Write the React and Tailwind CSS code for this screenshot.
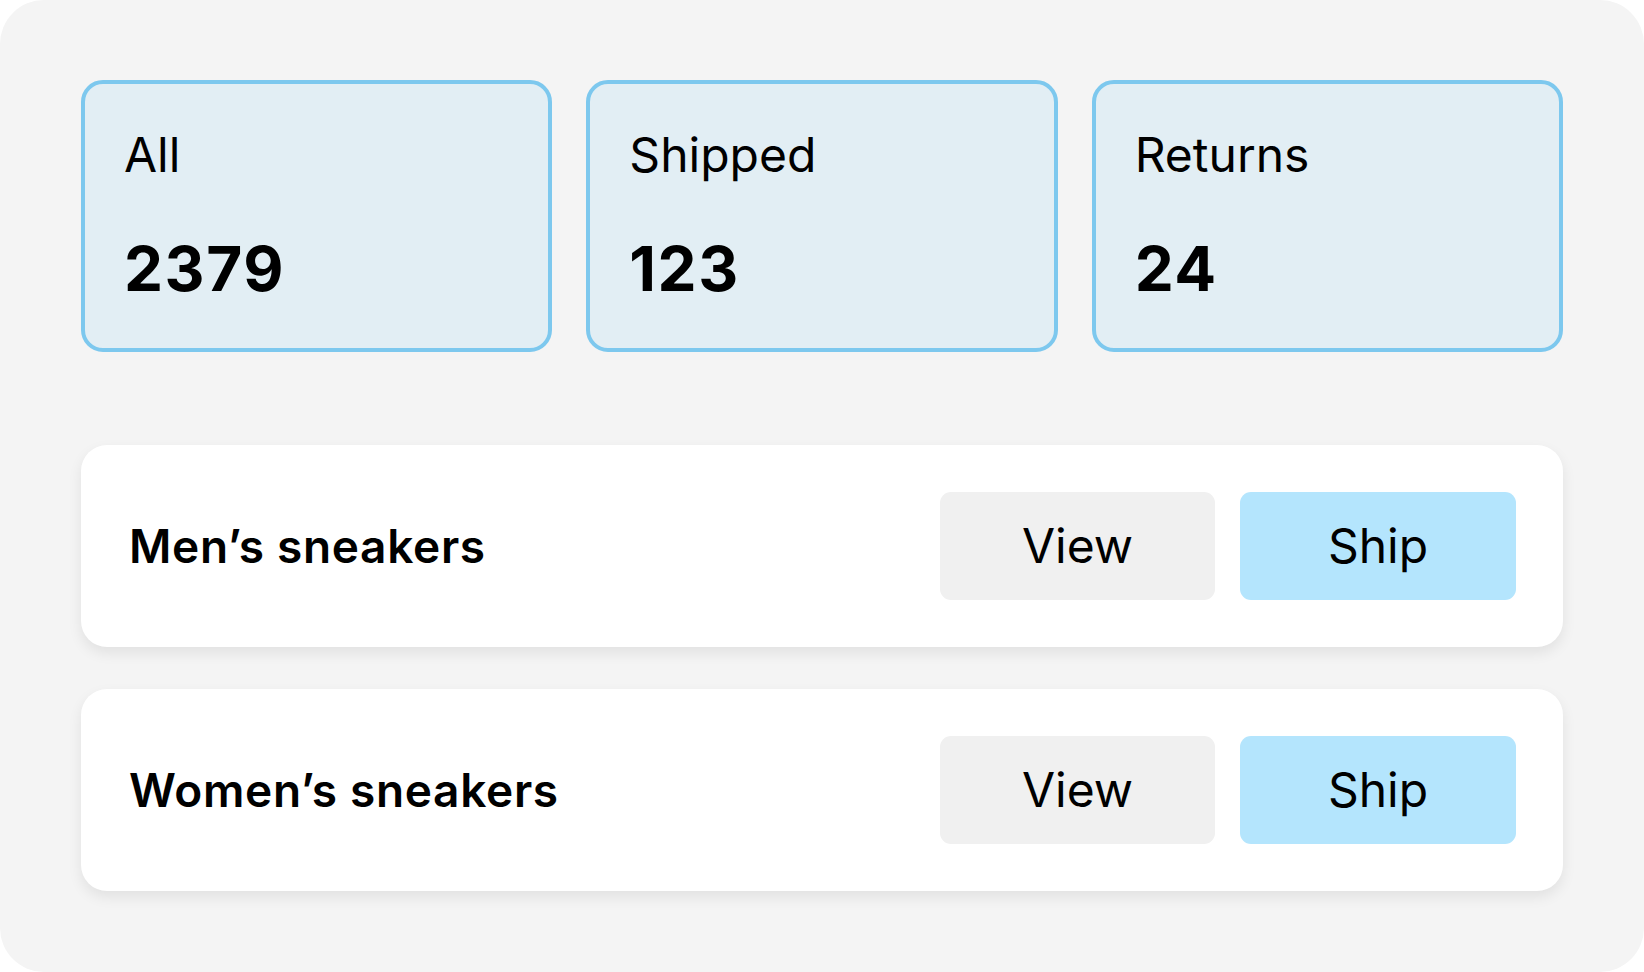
export default function App() {
  const stats = [
    { label: "All", value: "2379" },
    { label: "Shipped", value: "123" },
    { label: "Returns", value: "24" },
  ];
  const items = ["Men’s sneakers", "Women’s sneakers"];

  return (
    <div className="bg-white" style={{ fontFamily: "Inter, 'Noto Sans', sans-serif" }}>
      <div className="h-[972px] w-full rounded-[44px] bg-[#f4f4f4] px-[81px] pt-[80px] text-black">
        <div className="grid grid-cols-3 gap-[34px]">
          {stats.map((s) => (
            <div
              key={s.label}
              className="flex h-[272px] flex-col rounded-[22px] border-4 border-[#7dc8ee] bg-[#e2eef4] px-[39px] pt-[47px]"
            >
              <span className="text-[48px] leading-none font-normal">{s.label}</span>
              <span className="mt-[59px] text-[62px] leading-none font-bold tracking-[0.025em]">{s.value}</span>
            </div>
          ))}
        </div>

        <div className="mt-[93px] flex flex-col gap-[42px]">
          {items.map((name) => (
            <div
              key={name}
              className="flex items-center justify-between rounded-[26px] bg-white py-[47px] pr-[47px] pl-[48px] shadow-[0_6px_14px_rgba(0,0,0,0.08)]"
            >
              <span className="text-[46px] leading-none font-semibold tracking-[0.015em]">{name}</span>
              <div className="flex gap-[25px]">
                <button className="h-[108px] w-[275px] rounded-[11px] bg-[#f0f0f0] text-[48px] font-normal">
                  View
                </button>
                <button className="h-[108px] w-[276px] rounded-[11px] bg-[#b4e5fd] text-[48px] font-normal">
                  Ship
                </button>
              </div>
            </div>
          ))}
        </div>
      </div>
    </div>
  );
}
